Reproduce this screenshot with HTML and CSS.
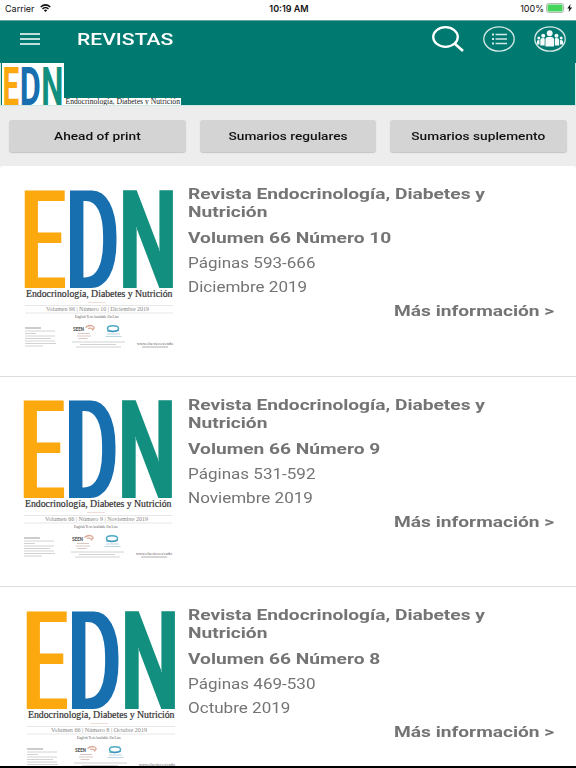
FILE: index.html
```
<!DOCTYPE html>
<html lang="es">

<head>
    <meta charset="UTF-8">
    <meta name="viewport" content="width=device-width, initial-scale=1.0">
    <title>Revistas</title>
    <link rel="stylesheet" href="styles.css">
</head>

<body>
    <div class="status-bar">
        <div class="status-left">
            <span>Carrier</span>
            <svg width="11" height="8" viewBox="0 0 11 8">
                <path d="M.7 3Q5.5-1.2 10.3 3M2.5 4.9Q5.5 2.2 8.5 4.9" fill="none" stroke="#111" stroke-width="1.5"/>
                <path d="M3.8 6.2Q5.5 4.8 7.2 6.2L5.5 8z" fill="#111"/>
            </svg>
        </div>
        <div class="status-time">10:19 AM</div>
        <div class="status-right">
            <span>100%</span>
            <svg width="27" height="10" viewBox="0 0 27 10">
                <rect x=".5" y=".5" width="17" height="9" rx="2" fill="#fff" stroke="#b5b5b5"/>
                <rect x="1.5" y="1.5" width="15" height="7" rx="1" fill="#44d65c"/>
                <path d="M18.6 3.5v3q1.2-1.5 0-3z" fill="#b5b5b5"/>
                <path d="M24.6 1L21.3 5.4h2L22.6 9l3.6-4.5h-2.2z" fill="#111"/>
            </svg>
        </div>
    </div>

    <header class="toolbar">
        <svg class="menu" width="20" height="12" viewBox="0 0 20 12">
            <path d="M0 1h20M0 6h20M0 11h20" stroke="#fff" stroke-width="1.6"/>
        </svg>
        <h1>REVISTAS</h1>
        <div class="actions">
            <svg width="32" height="26" viewBox="0 0 32 26">
                <ellipse cx="13.5" cy="11" rx="12.3" ry="9.8" fill="none" stroke="#fff" stroke-width="2.3"/>
                <path d="M22.5 17.5L31 25" stroke="#fff" stroke-width="2.6"/>
            </svg>
            <svg width="32" height="26" viewBox="0 0 32 26">
                <ellipse cx="16" cy="13" rx="15.2" ry="12.2" fill="none" stroke="#d5e9e6" stroke-width="1.3"/>
                <path d="M12.5 8.5h11.5M12.5 13h11.5M12.5 17.5h11.5" stroke="#d5e9e6" stroke-width="1.4"/>
                <path d="M9 8.5h2M9 13h2M9 17.5h2" stroke="#d5e9e6" stroke-width="1.8"/>
            </svg>
            <svg width="32" height="26" viewBox="0 0 32 26">
                <ellipse cx="16" cy="13" rx="15.2" ry="12.2" fill="none" stroke="#d5e9e6" stroke-width="1.3"/>
                <g fill="#f3faf9">
                    <circle cx="15.7" cy="7.2" r="2.9"/>
                    <path d="M11.4 20.5v-7q0-2.8 4.3-2.8t4.3 2.8v7z"/>
                    <circle cx="9.2" cy="9.8" r="2"/>
                    <circle cx="22.5" cy="9.8" r="2"/>
                    <path d="M6.3 19.5V14q0-1.9 2.7-1.9 1.7 0 1.7.8v6.600zM20.8 19.5v-6.600q0-.8 1.7-.8 2.7 0 2.7 1.900v5.500z"/>
                    <circle cx="4.8" cy="12" r="1.5"/>
                    <circle cx="27.2" cy="12" r="1.5"/>
                    <path d="M2.9 18.5v-3.2q0-1.4 2.6-1.4v4.6zM26 18.5v-4.6q3 0 3 1.4v3.2z"/>
                </g>
            </svg>
        </div>
    </header>

    <div class="banner">
        <svg width="182" height="42" viewBox="0 0 182 42">
            <rect x="1" y="0" width="62" height="42" fill="#fff"/>
            <rect x="63" y="35" width="117" height="7" fill="#fff"/>
            <g class="edn">
                <text class="e" transform="translate(1.5 41.5) scale(.55 1)">E</text>
                <text class="d" transform="translate(18.7 41.5) scale(.6 1)">D</text>
                <text class="n" transform="translate(40.3 41.5) scale(.58 1)">N</text>
            </g>
            <text class="logo-name" x="64.5" y="40.8" textLength="114.5" lengthAdjust="spacingAndGlyphs">Endocrinología, Diabetes y Nutrición</text>
        </svg>
    </div>

    <nav class="filters">
        <button><span>Ahead of print</span></button>
        <button><span>Sumarios regulares</span></button>
        <button><span>Sumarios suplemento</span></button>
    </nav>

    <!-- parts of the cover that are the same in every issue -->
    <svg class="defs" width="0" height="0">
        <filter id="widen" x="-5%" y="-5%" width="110%" height="110%" color-interpolation-filters="sRGB">
            <feMorphology operator="dilate" radius="2.5 0"/>
        </filter>
        <symbol id="cover" viewBox="0 0 152 164">
            <g class="edn big" filter="url(#widen)">
                <text class="e" transform="translate(-2.5 98.5) scale(.55 1)">E</text>
                <text class="d" transform="translate(42.5 98.5) scale(.57 1)">D</text>
                <text class="n" transform="translate(95.5 98.5) scale(.58 1)">N</text>
            </g>
            <text class="cover-name" x="2" y="108" textLength="146.5" lengthAdjust="spacingAndGlyphs">Endocrinología, Diabetes y Nutrición</text>
            <path d="M64 113.5h18" stroke="#e8cfc6" stroke-width=".7"/>
            <path d="M1 116.5h148M1 124h148" stroke="#ddd" stroke-width=".7"/>
            <text class="tiny" x="51" y="128.5" textLength="44" lengthAdjust="spacingAndGlyphs">English Text Available On Line</text>
            <path d="M1 139h16" stroke="#999"/>
            <path d="M1 142h30M1 144.5h11M1 147h30M1 149.5h26M1 152h30M1 154.5h31M1 157h18" stroke="#d2d2d2"/>
            <text class="seen" x="49" y="141.5" textLength="11" lengthAdjust="spacingAndGlyphs">SEEN</text>
            <path d="M61.5 138.5q4-3 7-1.5t.5 3.5M64 139.5q4-1.5 5 2" fill="none" stroke="#dba795" stroke-width="1.3"/>
            <path d="M54 144.5h12M53 147h14M54.5 149.5h9" stroke="#d0b9b4" stroke-width=".8"/>
            <ellipse cx="89" cy="139.5" rx="5.5" ry="2.7" fill="none" stroke="#4faac6" stroke-width="1.5"/>
            <path d="M83 142q6 2 12-.5" fill="none" stroke="#2d87b5" stroke-width=".8"/>
            <path d="M83 145h13M81.5 147.5h16" stroke="#a9cddb" stroke-width=".8"/>
            <path d="M48 153h53M56 155.5h36M52 158h45" stroke="#d2d2d2"/>
            <text class="tiny" x="113" y="156" textLength="36" lengthAdjust="spacingAndGlyphs">www.elsevier.es/endo</text>
            <path d="M118 158h26" stroke="#999" stroke-width=".8"/>
        </symbol>
    </svg>

    <main class="issues">
        <article class="issue">
            <svg class="cover" width="152" height="164" viewBox="0 0 152 164">
                <use href="#cover"/>
                <text class="cover-date" x="22" y="122.3" textLength="103" lengthAdjust="spacingAndGlyphs">Volumen 66 | Número 10 | Diciembre 2019</text>
            </svg>
            <div class="info">
                <h2>Revista Endocrinología, Diabetes y<br>Nutrición</h2>
                <h3>Volumen 66 Número 10</h3>
                <p>Páginas 593-666</p>
                <p>Diciembre 2019</p>
                <a class="more">Más información &gt;</a>
            </div>
        </article>
        <article class="issue second">
            <svg class="cover" width="152" height="164" viewBox="0 0 152 164">
                <use href="#cover"/>
                <text class="cover-date" x="22" y="122.3" textLength="103" lengthAdjust="spacingAndGlyphs">Volumen 66 | Número 9 | Noviembre 2019</text>
            </svg>
            <div class="info">
                <h2>Revista Endocrinología, Diabetes y<br>Nutrición</h2>
                <h3>Volumen 66 Número 9</h3>
                <p>Páginas 531-592</p>
                <p>Noviembre 2019</p>
                <a class="more">Más información &gt;</a>
            </div>
        </article>
        <article class="issue third">
            <svg class="cover" width="152" height="164" viewBox="0 0 152 164">
                <use href="#cover"/>
                <text class="cover-date" x="25" y="122.3" textLength="96" lengthAdjust="spacingAndGlyphs">Volumen 66 | Número 8 | Octubre 2019</text>
            </svg>
            <div class="info">
                <h2>Revista Endocrinología, Diabetes y<br>Nutrición</h2>
                <h3>Volumen 66 Número 8</h3>
                <p>Páginas 469-530</p>
                <p>Octubre 2019</p>
                <a class="more">Más información &gt;</a>
            </div>
        </article>
    </main>
</body>

</html>
```
FILE: styles.css
```
body {
    display: flex;
    flex-direction: column;
    box-sizing: border-box;
    height: 768px;
    margin: 0;
    overflow: hidden;
    background-color: #ededed;
    border-bottom: 2px solid #000;
    font-family: Roboto, sans-serif;
}

svg {
    display: block;
    flex: none;
}

.status-bar {
    display: grid;
    grid-template-columns: 1fr auto 1fr;
    align-items: center;
    flex: none;
    height: 16px;
    padding: 0 3px 4px 5px;
    background-color: #fff;
    color: #111;
    font-family: Inter, sans-serif;
    font-size: 9px;
}

.status-left,
.status-right {
    display: flex;
    align-items: center;
    gap: 5px;
}

.status-right {
    justify-content: flex-end;
    gap: 2px;
}

.status-time {
    font-weight: 600;
}

.toolbar {
    display: flex;
    align-items: center;
    flex: none;
    box-sizing: border-box;
    height: 43px;
    padding: 0 10px 6px 20px;
    background-color: #007a70;
    border-top: 1px solid #5fa99f;
}

h1 {
    margin: 1px 0 0 37px;
    color: #fff;
    font-size: 16.5px;
    font-weight: 500;
    transform: scaleX(1.28);
    transform-origin: left;
}

.actions {
    display: flex;
    gap: 19px;
    margin-left: auto;
}

.banner {
    flex: none;
    height: 42px;
    background-color: #007a70;
    border: solid #cfe8e4;
    border-width: 0 1px 1px;
}

.edn {
    font-size: 54px;
    font-weight: bold;
}

.edn.big {
    font-size: 138px;
    font-weight: normal;
}

.e {
    fill: #fca910;
}

.d {
    fill: #176fb0;
}

.n {
    fill: #128f7e;
}

.logo-name,
.cover-name,
.cover-date,
.tiny {
    font-family: "Liberation Serif", serif;
}

.logo-name {
    font-size: 7.5px;
    fill: #222;
}

.cover-name {
    font-size: 9.5px;
    fill: #333;
    stroke: #333;
    stroke-width: .2px;
}

.cover-date {
    font-size: 6px;
    fill: #888;
}

.tiny {
    font-size: 3.5px;
    fill: #555;
}

.seen {
    font-size: 4.5px;
    font-weight: bold;
    fill: #555;
}

.filters {
    display: grid;
    grid-template-columns: repeat(3, 1fr);
    gap: 14px;
    flex: none;
    padding: 14px 9px;
}

button {
    height: 32px;
    padding: 0 0 1px;
    background-color: #d4d4d4;
    border: 0;
    border-radius: 3px;
    box-shadow: 0 1px 1px #c4c4c4;
    color: #111;
    font-family: Roboto, sans-serif;
    font-size: 11.5px;
    font-weight: 500;
}

button span {
    display: inline-block;
    transform: scaleX(1.19);
}

.defs {
    position: absolute;
}

.issues {
    flex: 1;
    min-height: 0;
    overflow: hidden;
    background-color: #fff;
    border-radius: 3px 3px 0 0;
}

.issue {
    display: flex;
    box-sizing: border-box;
    height: 210.5px;
    padding: 19px 22px 0 24px;
    border-bottom: 1px solid #ddd;
}

.cover {
    margin-top: 4px;
    margin-right: 12px;
}

.second {
    padding-left: 23px;
}

.second .cover {
    margin-top: 3.5px;
    margin-right: 13px;
}

.third {
    padding-left: 26px;
}

.third .cover {
    margin-right: 10px;
}

.info {
    display: flex;
    flex-direction: column;
    flex: none;
    width: 296.5px;
    color: #747474;
    font-size: 13.8px;
    line-height: 18px;
    transform: scaleX(1.235);
    transform-origin: left;
}

h2,
h3,
.more {
    margin: 0;
    font-size: 15.5px;
    font-weight: bold;
}

h3 {
    margin: 8px 0 1px;
}

p {
    margin: 6px 0 0;
}

.more {
    margin-top: 6px;
    align-self: flex-end;
}
```
